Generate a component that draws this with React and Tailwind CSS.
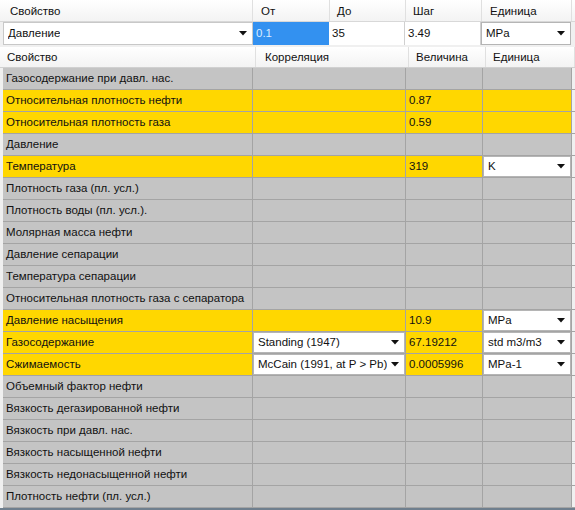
import React from "react";

const Arrow = () => (
  <svg width="8" height="5" viewBox="0 0 8 5" className="shrink-0">
    <polygon points="0,0 8,0 4,4.5" fill="#111" />
  </svg>
);

const Combo = ({ text, className = "" }) => (
  <div className={"flex items-center justify-between bg-white border border-[#b5b5b5] pl-[4px] pr-[5px] h-full " + className}>
    <span className="truncate pt-[1px]">{text}</span>
    <Arrow />
  </div>
);

const rows = [
  { n: "Газосодержание при давл. нас." },
  { n: "Относительная плотность нефти", y: true, v: "0.87" },
  { n: "Относительная плотность газа", y: true, v: "0.59" },
  { n: "Давление" },
  { n: "Температура", y: true, v: "319", u: "K" },
  { n: "Плотность газа (пл. усл.)" },
  { n: "Плотность воды (пл. усл.)." },
  { n: "Молярная масса нефти" },
  { n: "Давление сепарации" },
  { n: "Температура сепарации" },
  { n: "Относительная плотность газа с сепаратора" },
  { n: "Давление насыщения", y: true, v: "10.9", u: "MPa" },
  { n: "Газосодержание", y: true, c: "Standing (1947)", v: "67.19212", u: "std m3/m3" },
  { n: "Сжимаемость", y: true, c: "McCain (1991, at P > Pb)", v: "0.0005996", u: "MPa-1" },
  { n: "Объемный фактор нефти" },
  { n: "Вязкость дегазированной нефти" },
  { n: "Вязкость при давл. нас." },
  { n: "Вязкость насыщенной нефти" },
  { n: "Вязкость недонасыщенной нефти" },
  { n: "Плотность нефти (пл. усл.)" },
];

export default function App() {
  const font = { fontFamily: '"Liberation Sans", Arial, sans-serif' };
  return (
    <div className="w-[575px] h-[510px] bg-[#f0f0f0] overflow-hidden text-[11.5px] text-[#111] flex flex-col" style={font}>
      {/* top header */}
      <div className="grid grid-cols-[253px_77px_76px_76px_90px] h-[22px] shrink-0 bg-gradient-to-b from-white to-[#f3f3f3] border-b border-[#d8d8d8]">
        <div className="flex items-center pt-[2px] pl-[10px] border-r border-[#e0e0e0]">Свойство</div>
        <div className="flex items-center pt-[2px] pl-[8px] border-r border-[#e0e0e0]">От</div>
        <div className="flex items-center pt-[2px] pl-[7px] border-r border-[#e0e0e0]">До</div>
        <div className="flex items-center pt-[2px] pl-[7px] border-r border-[#e0e0e0]">Шаг</div>
        <div className="flex items-center pt-[2px] pl-[8px] border-r border-[#e0e0e0]">Единица</div>
      </div>
      {/* top data row */}
      <div className="grid grid-cols-[250px_76px_76px_76px_90px] h-[23px] shrink-0 pl-[3px]">
        <Combo text="Давление" className="border-[#c8c8c8] pl-[3px]" />
        <div className="flex items-center pt-[1px] pl-[3px] bg-[#3391f0] text-[#dcecff]">0.1</div>
        <div className="flex items-center pt-[1px] pl-[3px] bg-white border-r border-[#d0d0d0]">35</div>
        <div className="flex items-center pt-[1px] pl-[3px] bg-white border-r border-[#d0d0d0]">3.49</div>
        <Combo text="MPa" className="border-[#7a8a9a]" />
      </div>
      <div className="h-[2px] shrink-0" />
      {/* second header */}
      <div className="grid grid-cols-[253px_153px_77px_89px] h-[21px] shrink-0 bg-gradient-to-b from-white to-[#f3f3f3] border-b border-[#d0d0d0] pl-[3px]">
        <div className="flex items-center pt-[2px] pl-[7px] border-r border-[#e0e0e0] -ml-[3px]">Свойство</div>
        <div className="flex items-center pt-[2px] pl-[9px] border-r border-[#e0e0e0]">Корреляция</div>
        <div className="flex items-center pt-[2px] pl-[7px] border-r border-[#e0e0e0]">Величина</div>
        <div className="flex items-center pt-[2px] pl-[7px] border-r border-[#e0e0e0]">Единица</div>
      </div>
      {/* data rows */}
      <div className="flex flex-col shrink-0 pl-[3px]">
        {rows.map((r, i) => {
          const bg = r.y ? "bg-[#ffd700]" : "bg-[#c4c4c4]";
          return (
            <div key={i} className="grid grid-cols-[250px_153px_77px_89px] h-[22px] border-b border-[#a4a4a4]">
              <div className={"flex items-center pt-[1px] pl-[3px] border-r border-[#a4a4a4] whitespace-nowrap " + bg}>{r.n}</div>
              <div className={"border-r border-[#a4a4a4] " + bg}>
                {r.c ? <Combo text={r.c} className="border-[#a8a8a8] pl-[3px]" /> : null}
              </div>
              <div className={"flex items-center pt-[1px] pl-[3px] border-r border-[#a4a4a4] " + (r.v ? "bg-[#ffd700]" : bg)}>{r.v}</div>
              <div className={"border-r border-[#a4a4a4] " + bg}>
                {r.u ? <Combo text={r.u} className="border-[#a8a8a8] pl-[3px]" /> : null}
              </div>
            </div>
          );
        })}
      </div>
      <div className="h-[4px] shrink-0 bg-[#6f7f8e]" />
    </div>
  );
}
